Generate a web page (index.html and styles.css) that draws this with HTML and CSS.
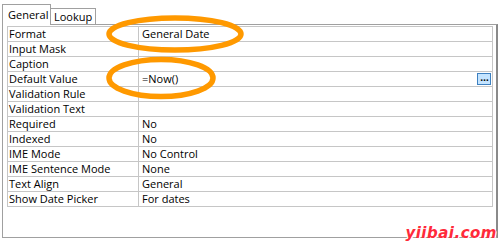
FILE: index.html
```html
<!DOCTYPE html>
<html>
<head>
<meta charset="utf-8">
<link rel="stylesheet" href="styles.css">
</head>
<body>
<div class="stage">
  <div class="tabs">
    <div class="tab tab-active">General</div>
    <div class="tab tab-inactive">Lookup</div>
  </div>
  <div class="panel">
    <div class="grid">
      <div class="row"><div class="lbl">Format</div><div class="val">General Date</div></div>
      <div class="row"><div class="lbl">Input Mask</div><div class="val"></div></div>
      <div class="row"><div class="lbl">Caption</div><div class="val"></div></div>
      <div class="row"><div class="lbl">Default Value</div><div class="val val-btn"><span>=Now()</span><span class="build">&hellip;</span></div></div>
      <div class="row"><div class="lbl">Validation Rule</div><div class="val"></div></div>
      <div class="row"><div class="lbl">Validation Text</div><div class="val"></div></div>
      <div class="row"><div class="lbl">Required</div><div class="val">No</div></div>
      <div class="row"><div class="lbl">Indexed</div><div class="val">No</div></div>
      <div class="row"><div class="lbl">IME Mode</div><div class="val">No Control</div></div>
      <div class="row"><div class="lbl">IME Sentence Mode</div><div class="val">None</div></div>
      <div class="row"><div class="lbl">Text Align</div><div class="val">General</div></div>
      <div class="row"><div class="lbl">Show Date Picker</div><div class="val">For dates</div></div>
    </div>
  </div>
  <svg class="marks" width="501" height="244" viewBox="0 0 501 244">
    <ellipse cx="175" cy="34" rx="66" ry="16" fill="none" stroke="#ff9900" stroke-width="5.5"/>
    <ellipse cx="161" cy="78" rx="52" ry="18.5" fill="none" stroke="#ff9900" stroke-width="5.5"/>
  </svg>
  <div class="watermark">yiibai.com</div>
</div>
</body>
</html>
```
FILE: styles.css
```css
html, body {
  margin: 0;
  padding: 0;
  background: #ffffff;
}
.stage {
  position: relative;
  width: 501px;
  height: 244px;
  overflow: hidden;
  padding: 4px 0 0 2px;
  box-sizing: border-box;
  font-family: "Segoe UI", "Open Sans", "Noto Sans", sans-serif;
  font-size: 11px;
  color: #000;
}
.tabs {
  display: flex;
  align-items: flex-end;
  height: 20px;
}
.tab {
  box-sizing: border-box;
  background: #fff;
  border: 1px solid #a0a0a0;
  border-bottom: none;
  line-height: 16px;
}
.tab-active {
  width: 49px;
  height: 21px;
  margin-bottom: -1px;
  padding: 2px 0 0 5px;
  position: relative;
  z-index: 1;
}
.tab-inactive {
  width: 45px;
  height: 16px;
  border-left: none;
  padding: 0 0 0 3px;
  line-height: 15px;
}
.panel {
  box-sizing: border-box;
  width: 496px;
  height: 214px;
  border: 1px solid #a0a0a0;
  border-right: 2px solid #8a8a8a;
  padding: 1px 0 0 4px;
}
.grid {
  width: 486px;
  box-sizing: border-box;
  border: 1px solid #c6c6c6;
  border-bottom: none;
}
.row {
  display: flex;
  height: 15px;
  box-sizing: border-box;
  border-bottom: 1px solid #c6c6c6;
  line-height: 14px;
}
.lbl {
  width: 131px;
  box-sizing: border-box;
  padding-left: 1px;
  border-right: 1px solid #c6c6c6;
}
.val {
  flex: 1;
  padding-left: 3px;
  color: #000;
}
.val-btn {
  display: flex;
  justify-content: space-between;
  align-items: center;
  padding-right: 1px;
}
.build {
  box-sizing: border-box;
  width: 14px;
  height: 12px;
  background: #c4e4ff;
  border: 1px solid #3d80c0;
  font-size: 10px;
  font-weight: bold;
  line-height: 6px;
  text-align: center;
  letter-spacing: -1px;
}
.marks {
  position: absolute;
  left: 0;
  top: 0;
  pointer-events: none;
}
.watermark {
  position: absolute;
  right: 4px;
  bottom: 2px;
  font-family: "DejaVu Sans", sans-serif;
  font-style: italic;
  font-weight: bold;
  font-size: 15px;
  color: #ff2a3a;
  text-shadow: 1px 1px 0 #fff, -1px -1px 0 #fff;
  letter-spacing: 0.5px;
}
```
